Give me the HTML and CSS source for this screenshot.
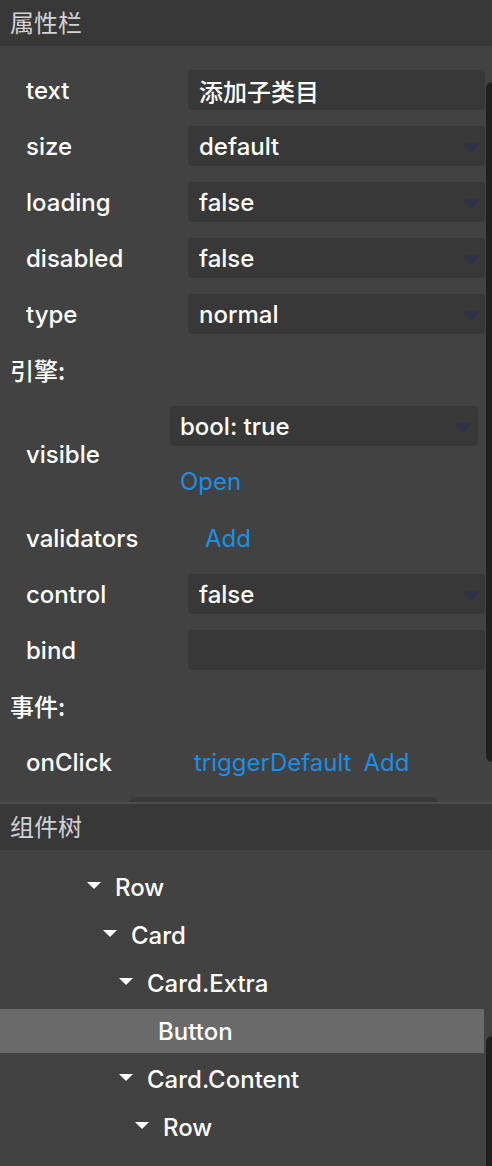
FILE: index.html
```html
<!DOCTYPE html>
<html lang="zh">
<head>
  <meta charset="UTF-8">
  <title>属性栏</title>
  <link rel="stylesheet" href="styles.css">
</head>
<body>
  <div class="panelTitle">属性栏</div>
  <div class="props">
    <div class="row">
      <span class="label">text</span>
      <div class="field"><span class="value">添加子类目</span></div>
    </div>
    <div class="row">
      <span class="label">size</span>
      <div class="field select"><span class="value">default</span><span class="arrow"></span></div>
    </div>
    <div class="row">
      <span class="label">loading</span>
      <div class="field select"><span class="value">false</span><span class="arrow"></span></div>
    </div>
    <div class="row">
      <span class="label">disabled</span>
      <div class="field select"><span class="value">false</span><span class="arrow"></span></div>
    </div>
    <div class="row">
      <span class="label">type</span>
      <div class="field select"><span class="value">normal</span><span class="arrow"></span></div>
    </div>

    <div class="section">引擎:</div>
    <div class="row tall">
      <span class="label short">visible</span>
      <div class="stack">
        <div class="field select wide"><span class="value">bool: true</span><span class="arrow"></span></div>
        <a class="link open">Open</a>
      </div>
    </div>
    <div class="row">
      <span class="label">validators</span>
      <a class="link add">Add</a>
    </div>
    <div class="row">
      <span class="label">control</span>
      <div class="field select"><span class="value">false</span><span class="arrow"></span></div>
    </div>
    <div class="row">
      <span class="label">bind</span>
      <div class="field"></div>
    </div>

    <div class="section">事件:</div>
    <div class="row">
      <span class="label">onClick</span>
      <div class="links">
        <a class="link">triggerDefault</a>
        <a class="link">Add</a>
      </div>
    </div>

    <div class="vscroll top"></div>
    <div class="hscroll"></div>
  </div>

  <div class="panelTitle tree">组件树</div>
  <div class="treeBody">
    <div class="node lv0"><span class="caret"></span>Row</div>
    <div class="node lv1"><span class="caret"></span>Card</div>
    <div class="node lv2"><span class="caret"></span>Card.Extra</div>
    <div class="node leaf selected">Button</div>
    <div class="node lv2"><span class="caret"></span>Card.Content</div>
    <div class="node lv3"><span class="caret"></span>Row</div>
    <div class="vscroll bottom"></div>
  </div>
</body>
</html>
```

FILE: styles.css
```css
body {
  margin: 0;
  width: 492px;
  height: 1166px;
  overflow: hidden;
  background-color: #424242;
  font-family: Inter, "Noto Sans CJK SC", sans-serif;
  font-size: 24px;
  color: #fff;
}

.panelTitle {
  height: 46px;
  line-height: 44px;
  padding-left: 10px;
  background-color: #383838;
  color: #d2d2d2;
  font-family: "Noto Sans CJK SC", sans-serif;
}
.panelTitle.tree {
  border-top: 2px solid #4d4d4d;
}

/* property list */
.props {
  position: relative;
  height: 756px;
  padding-top: 24px;
  box-sizing: border-box;
  overflow: hidden;
}
.row {
  display: flex;
  align-items: center;
  height: 40px;
  margin-bottom: 16px;
  font-weight: 500;
}
.row.tall {
  height: 96px;
}
.label {
  width: 162px;
  padding-left: 26px;
  flex-shrink: 0;
}
.label.short {
  width: 144px;
}
.field {
  display: flex;
  align-items: center;
  justify-content: space-between;
  width: 297px;
  height: 40px;
  padding: 0 5px 0 11px;
  box-sizing: border-box;
  background-color: #383838;
  border-radius: 4px;
}
.field.wide {
  width: 308px;
  padding-left: 10px;
}
.value {
  color: #fff;
}
.arrow {
  width: 0;
  height: 0;
  border-left: 9px solid transparent;
  border-right: 9px solid transparent;
  border-top: 10px solid #31314a;
  margin-top: 4px;
}
.wide .arrow {
  margin-right: 1px;
}
.stack {
  display: flex;
  flex-direction: column;
  gap: 16px;
}
.link {
  color: #1b8ee6;
  font-weight: 400;
  cursor: pointer;
}
.link.open {
  height: 40px;
  line-height: 40px;
  padding-left: 10px;
}
.link.add {
  margin-left: 17px;
}
.links {
  display: flex;
  gap: 12px;
  margin-left: 6px;
}
.section {
  height: 40px;
  line-height: 40px;
  margin-bottom: 16px;
  padding-left: 10px;
  font-family: "Noto Sans CJK SC", sans-serif;
  font-weight: 500;
}

/* scrollbars */
.vscroll {
  position: absolute;
  right: 0;
  width: 6px;
  background-color: #202020;
  border-radius: 6px 0 0 6px;
}
.vscroll.top {
  top: 36px;
  height: 680px;
}
.vscroll.bottom {
  top: 186px;
  bottom: 0;
  border-radius: 6px 0 0 0;
}
.hscroll {
  position: absolute;
  left: 130px;
  bottom: 0;
  width: 307px;
  height: 5px;
  background-color: #393939;
  border-radius: 4px 4px 0 0;
}

/* component tree */
.treeBody {
  position: relative;
  height: 316px;
  padding-top: 15px;
  box-sizing: border-box;
}
.node {
  display: flex;
  align-items: center;
  height: 44px;
  margin-bottom: 4px;
  width: 484px;
  box-sizing: border-box;
  font-weight: 500;
}
.node.lv0 { padding-left: 87px; }
.node.lv1 { padding-left: 103px; }
.node.lv2 { padding-left: 119px; }
.node.lv3 { padding-left: 135px; }
.node.leaf { padding-left: 158px; }
.node.selected {
  background-color: #6a6a6a;
}
.caret {
  width: 0;
  height: 0;
  border-left: 7.5px solid transparent;
  border-right: 7.5px solid transparent;
  border-top: 7px solid #fff;
  margin-right: 14px;
  margin-top: -4px;
}
```
